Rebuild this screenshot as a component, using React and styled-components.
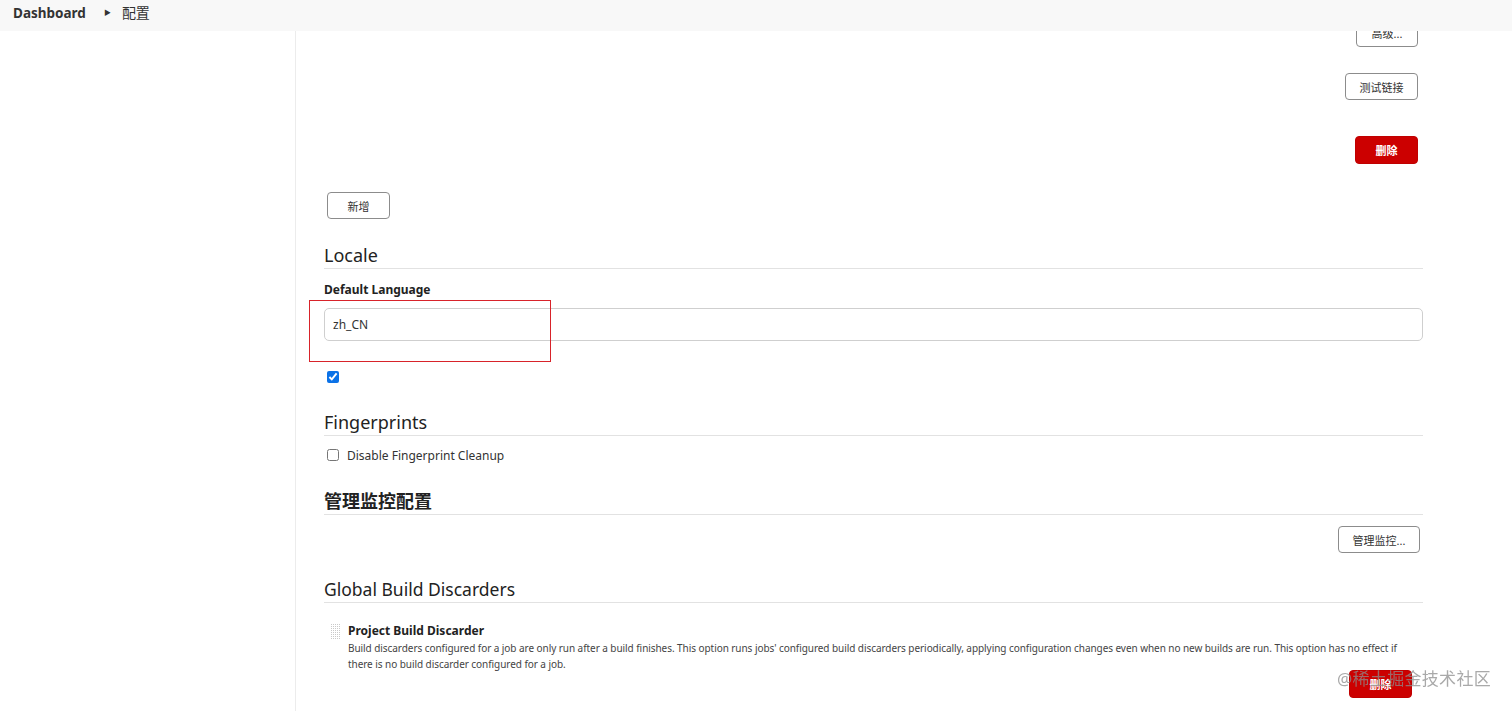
import React from "react";
import styled, { createGlobalStyle } from "styled-components";

const FONT = `"Noto Sans", "Noto Sans CJK SC", sans-serif`;

const Global = createGlobalStyle`
  html, body { margin: 0; padding: 0; background: #fff; }
  body { font-family: ${FONT}; color: #333; overflow: hidden; }
  * { box-sizing: border-box; }
`;

const Header = styled.header`
  position: fixed;
  top: 0;
  left: 0;
  right: 0;
  height: 31px;
  background: #f8f8f8;
  display: flex;
  align-items: flex-start;
  padding: 3px 0 0 13px;
  line-height: 20px;
  z-index: 5;
`;

const Crumb = styled.span`
  font-size: ${(p) => (p.$bold ? 13.5 : 14)}px;
  font-weight: ${(p) => (p.$bold ? 700 : 400)};
  color: #333;
`;

const Arrow = styled.span`
  font-size: 7px;
  color: #333;
  margin: 0 11px 0 18px;
`;

const Layout = styled.div`
  display: flex;
  min-height: 711px;
`;

const Sidebar = styled.aside`
  width: 296px;
  flex: none;
  border-right: 1px solid #ececec;
`;

const Main = styled.main`
  flex: 1;
  padding: 19px 89px 0 28px;
  display: flex;
  flex-direction: column;
`;

const Row = styled.div`
  display: flex;
  justify-content: ${(p) => (p.$right ? "flex-end" : "flex-start")};
  padding-right: ${(p) => p.$pr || 0}px;
  padding-left: ${(p) => p.$pl || 0}px;
  margin-top: ${(p) => p.$mt || 0}px;
`;

const Button = styled.button`
  font-family: ${FONT};
  font-size: 11px;
  height: ${(p) => (p.$h || 27)}px;
  min-width: ${(p) => p.$w}px;
  padding: 0 10px;
  border-radius: 4px;
  cursor: pointer;
  background: ${(p) => (p.$danger ? "#cc0000" : "#fff")};
  color: ${(p) => (p.$danger ? "#fff" : "#333")};
  font-weight: ${(p) => (p.$danger ? 700 : 400)};
  border: ${(p) => (p.$danger ? "1px solid #c00000" : "1.5px solid #8c8c8c")};
`;

const SectionTitle = styled.h2`
  margin: ${(p) => p.$mt}px 0 0;
  font-size: ${(p) => p.$size || 18}px;
  font-weight: ${(p) => (p.$heavy ? 700 : 400)};
  line-height: 24px;
  color: #222;
  padding-bottom: 1px;
  border-bottom: 1px solid #e2e2e2;
`;

const Label = styled.div`
  margin-top: 13px;
  font-size: 12px;
  font-weight: 700;
  line-height: 16px;
  color: #222;
`;

const InputWrap = styled.div`
  position: relative;
  margin-top: 10px;
`;

const TextInput = styled.input`
  width: 100%;
  height: 33px;
  border: 1.5px solid #cfcfcf;
  border-radius: 5px;
  padding: 0 8px;
  font-family: ${FONT};
  font-size: 12px;
  color: #333;
  outline: none;
`;

const Highlight = styled.div`
  position: absolute;
  left: -15px;
  top: -8px;
  width: 242px;
  height: 62px;
  border: 1.5px solid #d8232a;
  pointer-events: none;
`;

const CheckRow = styled.label`
  display: flex;
  align-items: center;
  gap: 8px;
  margin-top: ${(p) => p.$mt}px;
  padding-left: 3px;
  font-size: 12px;
  color: #333;
  height: 16px;
`;

const Check = styled.input`
  margin: 0;
  width: 12px;
  height: 12px;
  accent-color: #0b72e7;
`;

const Repeated = styled.div`
  display: flex;
  gap: 8px;
  margin-top: 19px;
  padding-left: 6px;
`;

const Handle = styled.div`
  width: 10px;
  height: 17px;
  flex: none;
  margin-top: 1px;
  background-color: #c9c9c9;
  background-image: linear-gradient(90deg, #fff 1px, transparent 1px),
    linear-gradient(#fff 1px, transparent 1px);
  background-size: 2px 2px;
`;

const ItemBody = styled.div`
  flex: 1;
  display: flex;
  flex-direction: column;
`;

const ItemTitle = styled.div`
  font-size: 12px;
  font-weight: 700;
  line-height: 18px;
  color: #222;
`;

const Desc = styled.p`
  margin: 0;
  font-size: 10px;
  letter-spacing: -0.06px;
  line-height: 16px;
  color: #444;
  max-width: 1066px;
`;

const Watermark = styled.div`
  position: fixed;
  right: 21px;
  bottom: 21px;
  font-size: 17px;
  color: rgba(140, 140, 140, 0.75);
  font-family: ${FONT};
  pointer-events: none;
  z-index: 6;
  letter-spacing: 0.3px;
`;

export default function App() {
  return (
    <>
      <Global />
      <Header>
        <Crumb $bold>Dashboard</Crumb>
        <Arrow>▶</Arrow>
        <Crumb>配置</Crumb>
      </Header>
      <Layout>
        <Sidebar />
        <Main>
          <Row $right $pr={5}>
            <Button $w={62} $h={28}>高级...</Button>
          </Row>
          <Row $right $pr={5} $mt={26}>
            <Button $w={73}>测试链接</Button>
          </Row>
          <Row $right $pr={5} $mt={36}>
            <Button $danger $w={63} $h={28}>删除</Button>
          </Row>
          <Row $pl={3} $mt={28}>
            <Button $w={63}>新增</Button>
          </Row>

          <SectionTitle $mt={24}>Locale</SectionTitle>
          <Label>Default Language</Label>
          <InputWrap>
            <TextInput defaultValue="zh_CN" />
            <Highlight />
          </InputWrap>
          <CheckRow $mt={28}>
            <Check type="checkbox" defaultChecked />
          </CheckRow>

          <SectionTitle $mt={25}>Fingerprints</SectionTitle>
          <CheckRow $mt={11}>
            <Check type="checkbox" />
            Disable Fingerprint Cleanup
          </CheckRow>

          <SectionTitle $mt={26} $heavy>管理监控配置</SectionTitle>
          <Row $right $pr={3} $mt={11}>
            <Button $w={82}>管理监控...</Button>
          </Row>

          <SectionTitle $mt={24} $size={17.5}>Global Build Discarders</SectionTitle>
          <Repeated>
            <Handle />
            <ItemBody>
              <ItemTitle>Project Build Discarder</ItemTitle>
              <Desc>
                Build discarders configured for a job are only run after a build finishes. This option runs jobs'
                configured build discarders periodically, applying configuration changes even when no new builds are
                run. This option has no effect if there is no build discarder configured for a job.
              </Desc>
              <Row $right $pr={11} $mt={-2}>
                <Button $danger $w={63} $h={28}>删除</Button>
              </Row>
            </ItemBody>
          </Repeated>
        </Main>
      </Layout>
      <Watermark>@稀土掘金技术社区</Watermark>
    </>
  );
}
